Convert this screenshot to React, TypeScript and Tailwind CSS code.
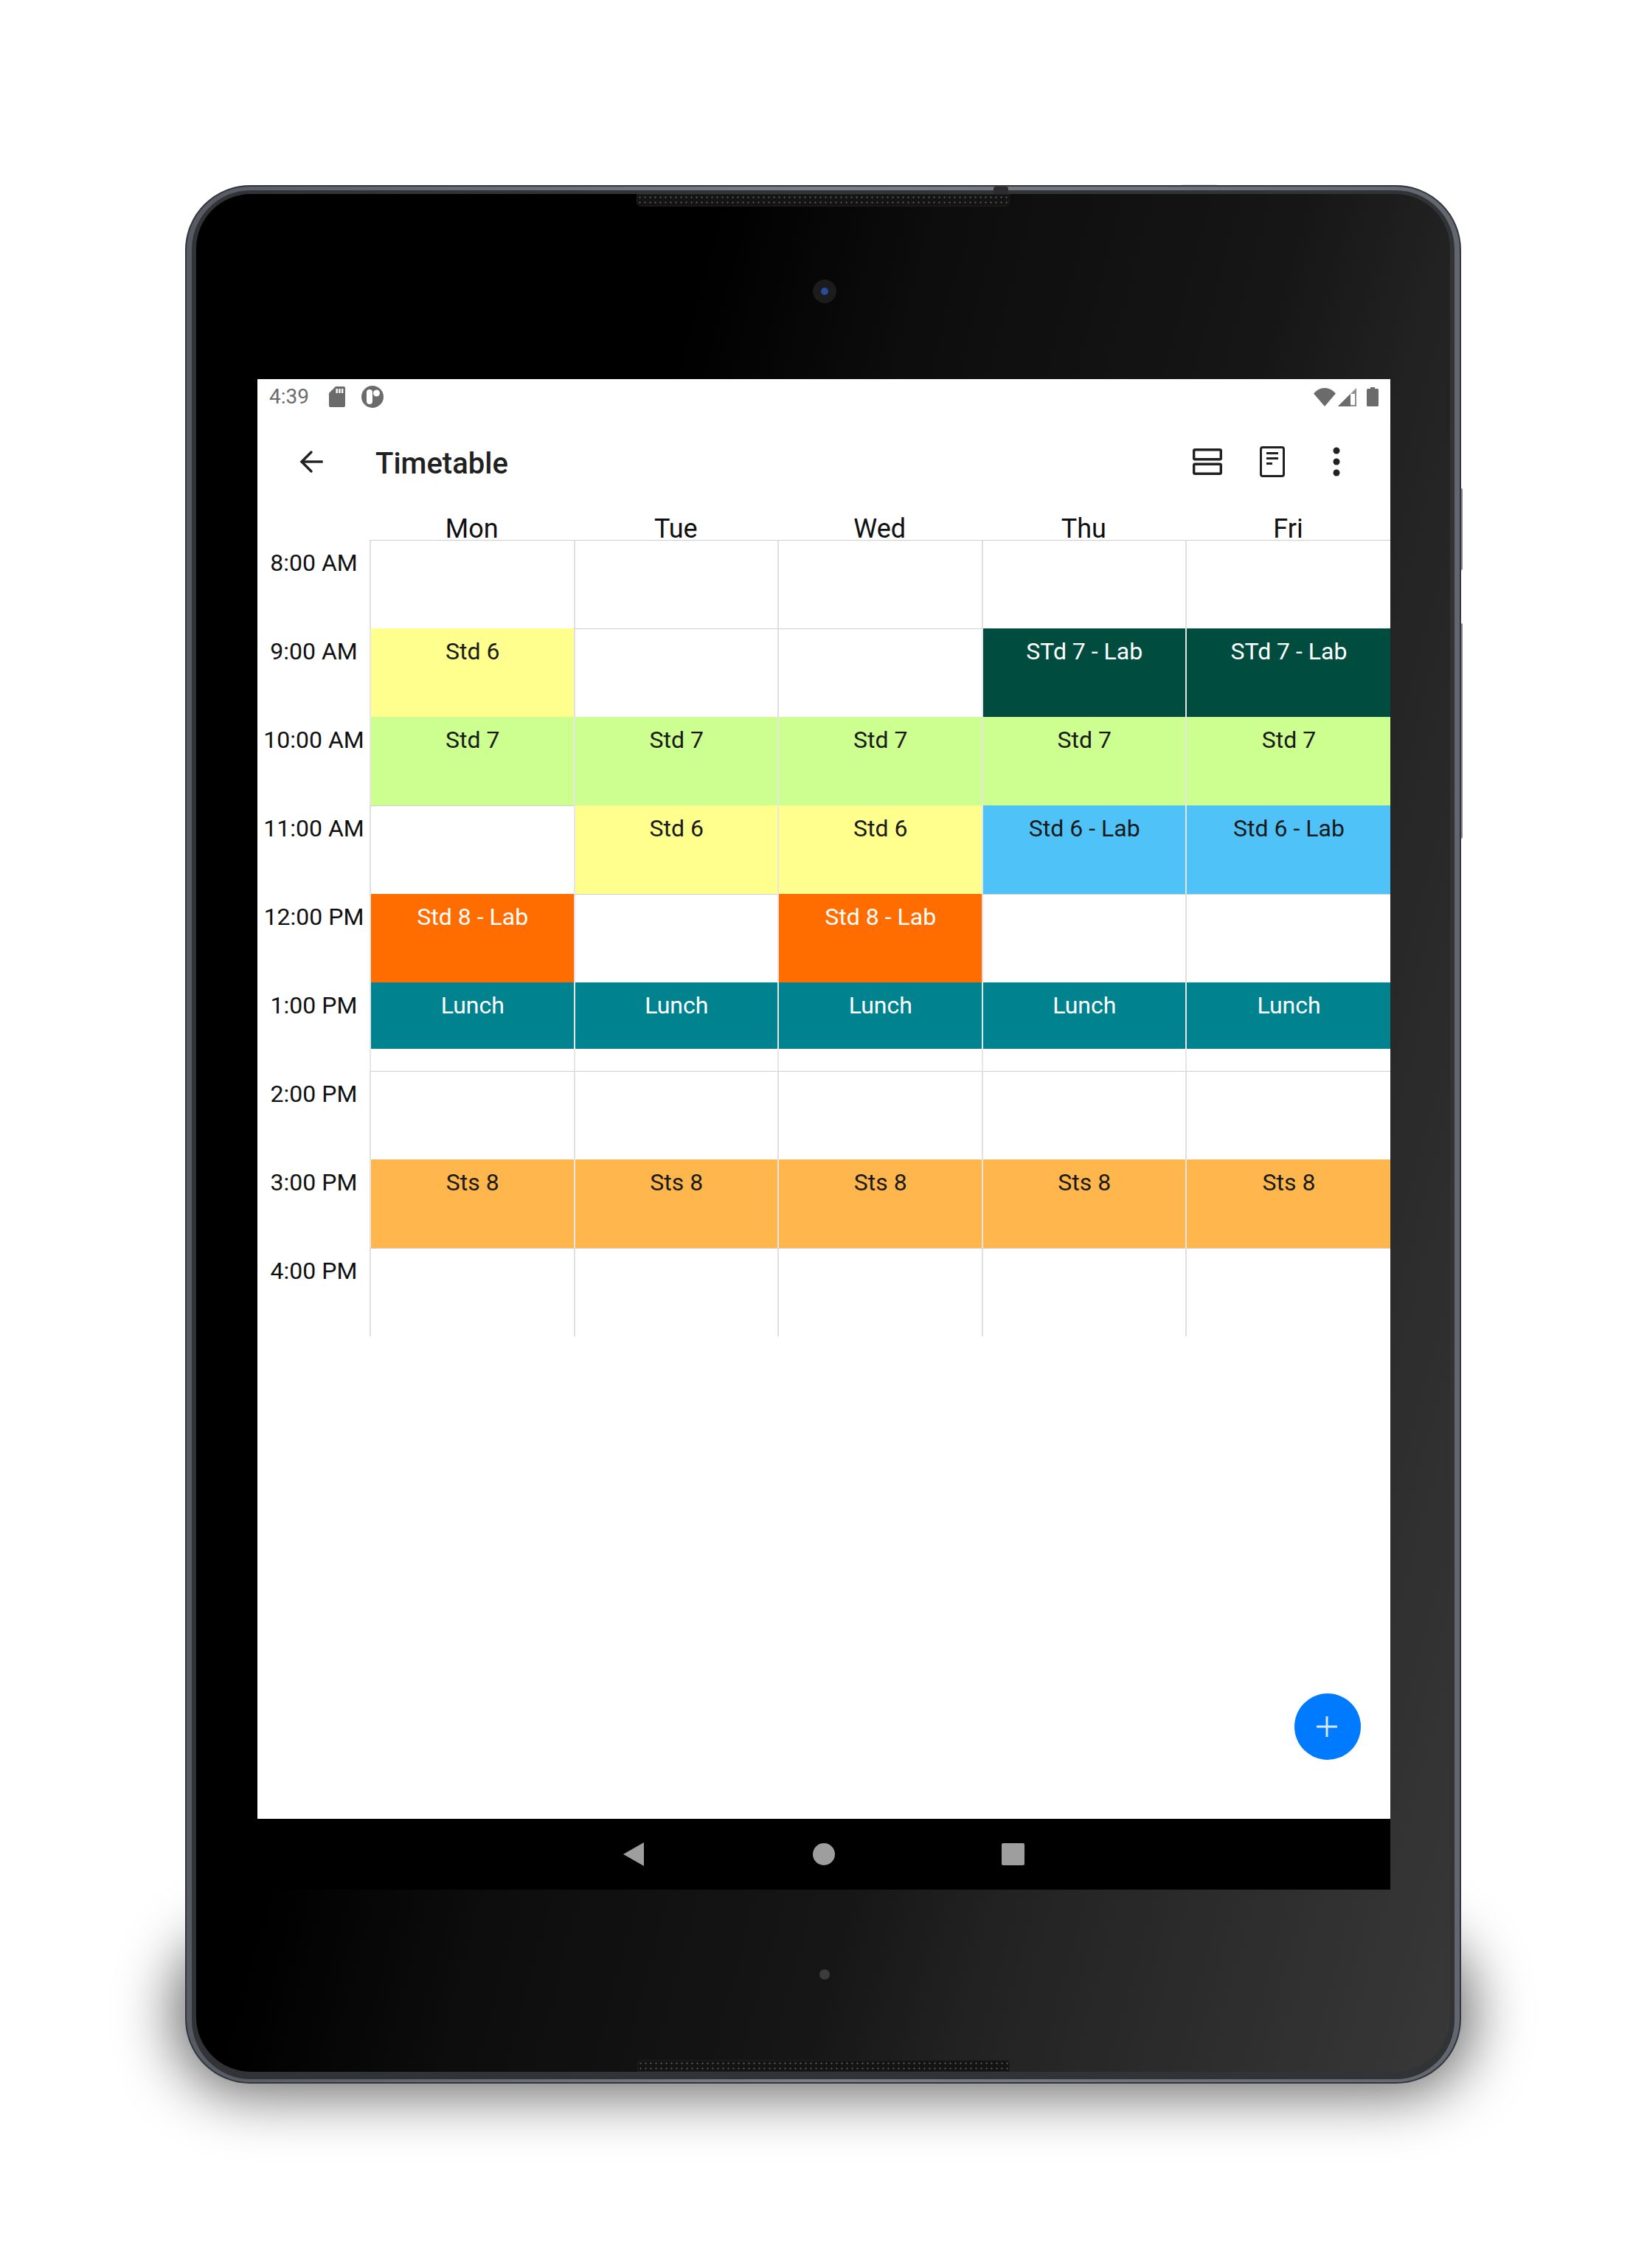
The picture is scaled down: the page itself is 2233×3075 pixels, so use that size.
import React from "react";

type Cell = { t?: string; c?: string; w?: boolean; short?: boolean };

const Y: Cell = { t: "Std 6", c: "bg-[#ffff8d]" };
const L: Cell = { t: "Std 7", c: "bg-[#ccff90]" };
const G: Cell = { t: "STd 7 - Lab", c: "bg-[#004d40]", w: true };
const B: Cell = { t: "Std 6 - Lab", c: "bg-[#4fc3f7]" };
const O: Cell = { t: "Std 8 - Lab", c: "bg-[#ff6d00]", w: true };
const T: Cell = { t: "Lunch", c: "bg-[#00838f]", w: true, short: true };
const A: Cell = { t: "Sts 8", c: "bg-[#ffb74d]" };
const E: Cell = {};

const days = ["Mon", "Tue", "Wed", "Thu", "Fri"];

const rows: { time: string; cells: Cell[] }[] = [
  { time: "8:00 AM", cells: [E, E, E, E, E] },
  { time: "9:00 AM", cells: [Y, E, E, G, G] },
  { time: "10:00 AM", cells: [L, L, L, L, L] },
  { time: "11:00 AM", cells: [E, Y, Y, B, B] },
  { time: "12:00 PM", cells: [O, E, O, E, E] },
  { time: "1:00 PM", cells: [T, T, T, T, T] },
  { time: "2:00 PM", cells: [E, E, E, E, E] },
  { time: "3:00 PM", cells: [A, A, A, A, A] },
  { time: "4:00 PM", cells: [E, E, E, E, E] },
];

function GridCell({ cell }: { cell: Cell }) {
  if (!cell.c) {
    return <div className="border-l-2 border-t border-l-[#e0e0e0] border-t-[#cfcfcf]" />;
  }
  const text = cell.w ? "text-white" : "text-[#1a1a1a]";
  return (
    <div className="flex flex-col border-l-2 border-l-[#e6e6e6]">
      <div className={`${cell.c} ${text} text-center pl-[1px] pt-[12px] leading-[38px] ${cell.short ? "h-[90px]" : "h-[120px]"}`}>
        {cell.t}
      </div>
    </div>
  );
}

function StatusBar() {
  return (
    <div className="flex h-[48px] items-center pl-[16px] pr-[16px] text-[#6b6b6b]">
      <span className="text-[28px] leading-[48px] w-[57px]">4:39</span>
      <svg className="ml-[24px]" width="22" height="28" viewBox="0 0 22 28">
        <path d="M9 0h11a2 2 0 0 1 2 2v24a2 2 0 0 1-2 2H2a2 2 0 0 1-2-2V9z" fill="#6b6b6b" />
        <rect x="9.5" y="3" width="2.4" height="6" fill="#fff" />
        <rect x="13.2" y="3" width="2.4" height="6" fill="#fff" />
        <rect x="16.9" y="3" width="2.4" height="6" fill="#fff" />
      </svg>
      <svg className="ml-[22px]" width="30" height="30" viewBox="0 0 30 30">
        <circle cx="15" cy="15" r="15" fill="#6b6b6b" />
        <rect x="7" y="5" width="8" height="20" rx="4" fill="#fff" />
        <circle cx="20.5" cy="10" r="4.5" fill="#fff" />
      </svg>
      <div className="flex-1" />
      <svg width="30" height="25" viewBox="0 0 30 25">
        <path d="M0 7.5C4 3 9 0 15 0s11 3 15 7.5L15 25z" fill="#6b6b6b" />
      </svg>
      <svg className="ml-[3px]" width="25" height="25" viewBox="0 0 25 25">
        <path d="M25 0v25H0z" fill="#8f8f8f" />
        <path d="M0 25 17 8v17z" fill="#6b6b6b" />
        <rect x="17" y="8" width="6" height="15" fill="#fff" />
      </svg>
      <svg className="ml-[14px]" width="16" height="26" viewBox="0 0 16 26">
        <path d="M5 0h6v2h3.500a1.500 1.500 0 0 1 1.500 1.500v21a1.500 1.500 0 0 1-1.500 1.500h-13A1.500 1.500 0 0 1 0 24.500v-21A1.500 1.500 0 0 1 1.500 2H5z" fill="#6b6b6b" />
      </svg>
    </div>
  );
}

function Toolbar() {
  return (
    <div className="flex h-[128px] items-center pl-[49px] pr-[49px]">
      <div className="flex h-[48px] w-[48px] items-center justify-center">
        <svg width="32" height="32" viewBox="0 0 32 32" fill="none" stroke="#212121" strokeWidth="3.4" strokeLinecap="square">
          <path d="M30 16H4" />
          <path d="M16 3 3 16l13 13" strokeLinecap="round" />
        </svg>
      </div>
      <span className="ml-[63px] mt-[6px] text-[40px] font-medium leading-[48px] text-[#212121]">Timetable</span>
      <div className="flex-1" />
      <div className="flex h-[48px] w-[48px] items-center justify-center">
        <svg width="40" height="36" viewBox="0 0 40 36" fill="none" stroke="#212121" strokeWidth="3.4">
          <rect x="1.700" y="1.700" width="36.600" height="13" rx="1.500" />
          <rect x="1.700" y="21.300" width="36.600" height="13" rx="1.500" />
        </svg>
      </div>
      <div className="ml-[40px] flex h-[48px] w-[48px] items-center justify-center">
        <svg width="34" height="42" viewBox="0 0 34 42" fill="none" stroke="#212121">
          <rect x="1.500" y="1.500" width="31" height="39" rx="2.500" strokeWidth="3" />
          <path d="M9 9.500h16M9 16.500h16M9 23.500h8" strokeWidth="3" />
        </svg>
      </div>
      <div className="ml-[39px] flex h-[48px] w-[48px] items-center justify-center">
        <svg width="10" height="40" viewBox="0 0 10 40" fill="#212121">
          <circle cx="5" cy="5" r="4.500" />
          <circle cx="5" cy="20" r="4.500" />
          <circle cx="5" cy="35" r="4.500" />
        </svg>
      </div>
    </div>
  );
}

function Timetable() {
  return (
    <div className="text-[32px] text-black">
      <div className="grid h-[42px] grid-cols-[152px_repeat(4,276.5px)_1fr] text-[36px] leading-[30px] text-[#111]">
        <div />
        {days.map((d) => (
          <div key={d} className="text-center pl-[1px] pt-[12px]">
            {d}
          </div>
        ))}
      </div>
      {rows.map((r) => (
        <div key={r.time} className="grid h-[120px] grid-cols-[152px_repeat(4,276.5px)_1fr]">
          <div className="pt-[12px] pl-[1px] text-center leading-[38px] text-[#111]">{r.time}</div>
          {r.cells.map((c, i) => (
            <GridCell key={i} cell={c} />
          ))}
        </div>
      ))}
    </div>
  );
}

function NavBar() {
  return (
    <div className="flex h-[96px] items-center bg-black pl-[496px]">
      <svg width="28" height="32" viewBox="0 0 28 32">
        <path d="M28 0v32L0 16z" fill="#9e9e9e" />
      </svg>
      <div className="ml-[229px] h-[30px] w-[30px] rounded-full bg-[#9e9e9e]" />
      <div className="ml-[226px] h-[30px] w-[31px] rounded-[2px] bg-[#9e9e9e]" />
    </div>
  );
}

const mesh =
  "bg-[#141414] bg-[radial-gradient(#4a4a4a_1px,transparent_1.400px)] bg-[length:7px_7px] border border-[#1f1f1f]";

export default function App() {
  return (
    <div className="h-[3075px] w-[2233px] overflow-hidden bg-white pl-[251px] pt-[251px] [font-family:Roboto,'Liberation_Sans',sans-serif]">
      <div className="relative h-[2574px] w-[1730px]">
        {/* cast shadow */}
        <div className="absolute bottom-[-14px] left-[-14px] right-[-14px] h-[220px] rounded-[100px] bg-black/60 blur-[40px]" />
        {/* side buttons */}
        <div className="absolute right-[-2px] top-[411px] h-[111px] w-[6px] rounded-r-[2px] bg-[#80848c]" />
        <div className="absolute right-[-2px] top-[594px] h-[292px] w-[6px] rounded-r-[2px] bg-[#80848c]" />
        {/* top markers */}
        <div className="absolute left-[1350px] top-[-1px] h-[3px] w-[50px] rounded-t-[4px] bg-[#dfe0e2]" />

        <div className="relative h-full rounded-[88px] border-2 border-[#33363c] bg-[linear-gradient(90deg,#565a62,#7b7f88_50%,#62666f)] px-[7px] pb-[4px] pt-[5px]">
          <div className="h-full rounded-[80px] bg-[#323336] px-[6px] pb-[10px] pt-[5px]">
            <div className="relative h-full rounded-[74px] bg-[linear-gradient(105deg,#000_30%,#0d0d0d_43%,#161616_63%,#222_72%,#383838_100%)] pl-[83px] pt-[251px]">
              {/* top notch */}
              <div className="absolute left-[1081px] top-[-10px] h-[10px] w-[20px] rounded-t-[3px] bg-[#2c2c2e]" />
              {/* top speaker */}
              <div className={`absolute left-[597px] top-0 h-[17px] w-[506px] rounded-b-[6px] ${mesh}`} />
              {/* front camera */}
              <div className="absolute left-[836px] top-[116px] flex h-[32px] w-[32px] items-center justify-center rounded-full bg-[#1c1c1c]">
                <div className="h-[10px] w-[10px] rounded-full bg-[#2a4aa0]" />
              </div>
              {/* bottom sensor */}
              <div className="absolute left-[845px] top-[2407px] h-[14px] w-[14px] rounded-full bg-[#3c3c3c]" />
              {/* bottom speaker */}
              <div className={`absolute bottom-0 left-[598px] h-[16px] w-[505px] rounded-t-[4px] ${mesh}`} />

              {/* screen */}
              <div className="relative flex h-[2048px] w-[1536px] flex-col bg-white">
                <StatusBar />
                <Toolbar />
                <Timetable />
                <div className="flex-1" />
                <NavBar />
                {/* FAB */}
                <div className="absolute bottom-[176px] right-[40px] flex h-[90px] w-[90px] items-center justify-center rounded-full bg-[#007aff]">
                  <svg className="mr-[3px]" width="28" height="28" viewBox="0 0 28 28" stroke="#d6e8ff" strokeWidth="3">
                    <path d="M14 0v28M0 14h28" />
                  </svg>
                </div>
              </div>
            </div>
          </div>
        </div>
      </div>
    </div>
  );
}
